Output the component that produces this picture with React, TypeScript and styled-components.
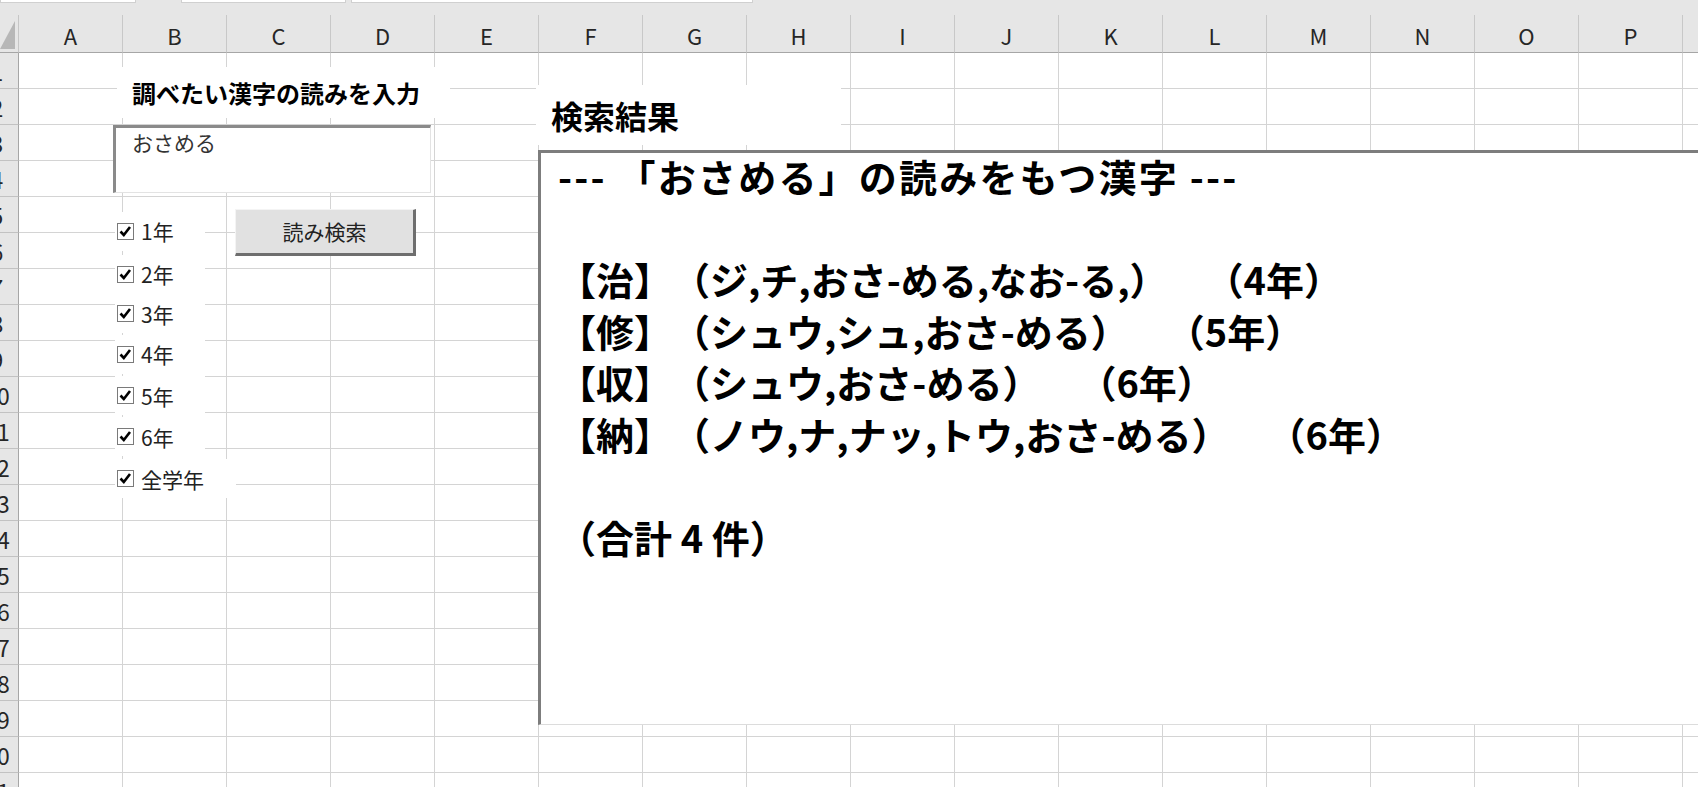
import React from "react";
import styled, { createGlobalStyle } from "styled-components";

const COLS = ["A", "B", "C", "D", "E", "F", "G", "H", "I", "J", "K", "L", "M", "N", "O", "P", "Q"];
const ROW_COUNT = 21;

const GlobalStyle = createGlobalStyle`
  html, body {
    margin: 0;
    padding: 0;
    background: #ffffff;
    overflow: hidden;
  }
  body {
    font-family: "Noto Sans CJK JP", "Noto Sans", sans-serif;
    color: #000;
    text-spacing-trim: space-all;
  }
`;

const Window = styled.div`
  width: 1698px;
  height: 787px;
  overflow: hidden;
  background: #fff;
`;

const TopStrip = styled.div`
  height: 15px;
  background: #e6e6e6;
  display: flex;
  align-items: flex-start;
  gap: 5px;
`;

const StripSegment = styled.div<{ $w: number; $ml?: number }>`
  width: ${(p) => p.$w}px;
  margin-left: ${(p) => p.$ml ?? 0}px;
  height: 2px;
  background: #ffffff;
  border: 1px solid #d0d0d0;
  border-top: none;
`;

const Sheet = styled.div`
  position: relative;
  display: grid;
  grid-template-columns: 19px repeat(${COLS.length}, 104px);
  grid-template-rows: 38px repeat(${ROW_COUNT}, 36px);
`;

const Corner = styled.div`
  background: #e6e6e6;
  border-bottom: 1px solid #a6a6a6;
  border-right: 1px solid #c6c6c6;
  box-sizing: border-box;
  display: flex;
  align-items: flex-end;
  padding-bottom: 2px;
`;

const ColHeader = styled.div`
  box-sizing: border-box;
  background: #e6e6e6;
  border-bottom: 1px solid #a6a6a6;
  border-right: 1px solid #c8c8c8;
  display: flex;
  align-items: center;
  justify-content: center;
  font-size: 22px;
  color: #262626;
  padding-top: 3px;
`;

const RowHeader = styled.div`
  box-sizing: border-box;
  background: #e6e6e6;
  border-bottom: 1px solid #c2c2c2;
  border-right: 1px solid #a6a6a6;
  overflow: hidden;
  display: flex;
  align-items: center;
`;

const RowNum = styled.span`
  flex: 0 0 40px;
  margin-left: -23px;
  text-align: center;
  font-size: 23px;
  color: #262626;
`;

const Cell = styled.div`
  box-sizing: border-box;
  border-right: 1px solid #d4d4d4;
  border-bottom: 1px solid #d4d4d4;
`;

/* floating shapes / form controls on the sheet */
const Shape = styled.div<{ $x: number; $y: number; $w: number; $h: number }>`
  position: absolute;
  left: ${(p) => p.$x}px;
  top: ${(p) => p.$y}px;
  width: ${(p) => p.$w}px;
  height: ${(p) => p.$h}px;
  box-sizing: border-box;
`;

const PromptLabel = styled(Shape)`
  background: #fff;
  display: flex;
  align-items: center;
  padding-left: 15px;
  font-size: 24px;
  font-weight: 700;
`;

const InputBox = styled(Shape)`
  background: #fff;
  border-top: 3px solid #8a8a8a;
  border-left: 3px solid #8a8a8a;
  border-right: 1px solid #e3e3e3;
  border-bottom: 1px solid #e3e3e3;
  padding: 0 0 0 16px;
  font-size: 21px;
  line-height: 28px;
  color: #333;
`;

const SearchButton = styled(Shape)`
  background: #e1e1e1;
  border-top: 1px solid #f4f4f4;
  border-left: 1px solid #f4f4f4;
  border-right: 3px solid #6e6e6e;
  border-bottom: 3px solid #6e6e6e;
  display: flex;
  align-items: center;
  justify-content: center;
  font-size: 21px;
  color: #222;
  padding-bottom: 2px;
`;

const CheckRow = styled(Shape)`
  background: #fff;
  display: flex;
  align-items: center;
  padding-left: 2px;
  gap: 7px;
  font-size: 21px;
  color: #222;
`;

const CheckBox = styled.span`
  width: 17px;
  height: 17px;
  box-sizing: border-box;
  border: 1px solid #7a7a7a;
  background: #fff;
  display: flex;
  align-items: center;
  justify-content: center;
`;

const ResultTitle = styled(Shape)`
  background: #fff;
  display: flex;
  align-items: center;
  padding-left: 15px;
  font-size: 32px;
  font-weight: 700;
`;

const ResultBox = styled(Shape)`
  background: #fff;
  border-top: 3px solid #7d7d7d;
  border-left: 3px solid #7d7d7d;
  border-bottom: 1px solid #dcdcdc;
  padding-left: 17px;
  font-size: 38px;
  font-weight: 700;
  line-height: 51.5px;
  color: #000;
`;

const ResultLines = styled.div`
  margin-top: -3px;
`;

const ResultLine = styled.div<{ $heading?: boolean }>`
  height: 51.5px;
  white-space: pre;
  letter-spacing: ${(p) => (p.$heading ? "2.2px" : "normal")};
`;

const Check = () => (
  <svg width="15" height="15" viewBox="0 0 15 15">
    <path d="M2.5 7.5 L5.8 11 L12 3" fill="none" stroke="#000" strokeWidth="2.6" />
  </svg>
);

const grades = [
  { label: "1年", y: 196.5, w: 90 },
  { label: "2年", y: 239.5, w: 90 },
  { label: "3年", y: 279, w: 90 },
  { label: "4年", y: 319.5, w: 90 },
  { label: "5年", y: 361, w: 90 },
  { label: "6年", y: 402, w: 90 },
  { label: "全学年", y: 444, w: 121 },
];

const resultLines = [
  "--- 「おさめる」の読みをもつ漢字 ---",
  "",
  "【治】（ジ,チ,おさ-める,なお-る,）　（4年）",
  "【修】（シュウ,シュ,おさ-める）　（5年）",
  "【収】（シュウ,おさ-める）　（6年）",
  "【納】（ノウ,ナ,ナッ,トウ,おさ-める）　（6年）",
  "",
  "（合計 4 件）",
];

const App: React.FC = () => {
  const rows = Array.from({ length: ROW_COUNT }, (_, i) => i + 1);

  return (
    <Window>
      <GlobalStyle />
      <TopStrip>
        <StripSegment $w={134} />
        <StripSegment $w={163} $ml={40} />
        <StripSegment $w={400} />
      </TopStrip>
      <Sheet>
        <Corner>
          <svg width="16" height="29" viewBox="0 0 16 29">
            <polygon points="0,28 15,28 15,0" fill="#b7b7b7" />
          </svg>
        </Corner>
        {COLS.map((c) => (
          <ColHeader key={c}>{c}</ColHeader>
        ))}
        {rows.map((r) => (
          <React.Fragment key={r}>
            <RowHeader>
              <RowNum>{r}</RowNum>
            </RowHeader>
            {COLS.map((c) => (
              <Cell key={c + r} />
            ))}
          </React.Fragment>
        ))}

        <PromptLabel $x={117} $y={52} $w={333} $h={51}>
          調べたい漢字の読みを入力
        </PromptLabel>
        <InputBox $x={113} $y={110} $w={318} $h={68}>
          おさめる
        </InputBox>
        <SearchButton $x={235} $y={194} $w={181} $h={47}>
          読み検索
        </SearchButton>
        {grades.map((g) => (
          <CheckRow key={g.label} $x={115} $y={g.y} $w={g.w} $h={39}>
            <CheckBox>
              <Check />
            </CheckBox>
            {g.label}
          </CheckRow>
        ))}

        <ResultTitle $x={536} $y={70} $w={305} $h={60}>
          検索結果
        </ResultTitle>
        <ResultBox $x={538} $y={135} $w={1200} $h={575}>
          <ResultLines>
            {resultLines.map((l, i) => (
              <ResultLine key={i} $heading={i === 0}>
                {l}
              </ResultLine>
            ))}
          </ResultLines>
        </ResultBox>
      </Sheet>
    </Window>
  );
};

export default App;
